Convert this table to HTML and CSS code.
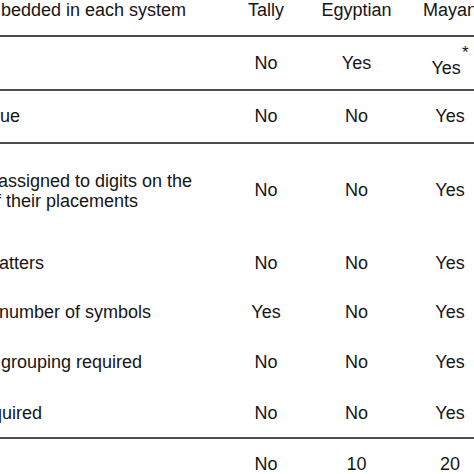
FILE: index.html
```html
<!DOCTYPE html>
<html>
<head>
<meta charset="utf-8">
<link rel="stylesheet" href="styles.css">
</head>
<body>
<div class="table">
  <div class="row head ruled">
    <div class="label"><span class="frag f1">bedded in each system</span></div>
    <div class="cell">Tally</div>
    <div class="cell">Egyptian</div>
    <div class="cell">Mayan</div>
  </div>
  <div class="row r1 ruled">
    <div class="label"></div>
    <div class="cell">No</div>
    <div class="cell">Yes</div>
    <div class="cell low">Yes<span class="star">*</span></div>
  </div>
  <div class="row r2 ruled">
    <div class="label"><span class="frag f0">ue</span></div>
    <div class="cell">No</div>
    <div class="cell">No</div>
    <div class="cell">Yes</div>
  </div>
  <div class="row r3">
    <div class="label two"><span class="frag fm2">assigned to digits on the</span><span class="frag fm4">f their placements</span></div>
    <div class="cell">No</div>
    <div class="cell">No</div>
    <div class="cell">Yes</div>
  </div>
  <div class="row r4">
    <div class="label"><span class="frag fm1">atters</span></div>
    <div class="cell">No</div>
    <div class="cell">No</div>
    <div class="cell">Yes</div>
  </div>
  <div class="row r5">
    <div class="label"><span class="frag fm1">number of symbols</span></div>
    <div class="cell">Yes</div>
    <div class="cell">No</div>
    <div class="cell">Yes</div>
  </div>
  <div class="row r6">
    <div class="label"><span class="frag f1">grouping required</span></div>
    <div class="cell">No</div>
    <div class="cell">No</div>
    <div class="cell">Yes</div>
  </div>
  <div class="row r7 ruled">
    <div class="label"><span class="frag fm8">quired</span></div>
    <div class="cell">No</div>
    <div class="cell">No</div>
    <div class="cell">Yes</div>
  </div>
  <div class="row r8">
    <div class="label"></div>
    <div class="cell">No</div>
    <div class="cell">10</div>
    <div class="cell">20</div>
  </div>
</div>
</body>
</html>
```
FILE: styles.css
```css
html, body {
  margin: 0;
  padding: 0;
  background: #ffffff;
  overflow: hidden;
}
body {
  width: 474px;
  height: 474px;
  font-family: "Liberation Sans", Arial, sans-serif;
  font-size: 18px;
  color: #151515;
}
.table {
  width: 498px;
}
.row {
  display: grid;
  grid-template-columns: 221px 90px 91px 96px;
  box-sizing: border-box;
  line-height: 21px;
}
.ruled {
  border-bottom: 2px solid #4d4d4d;
}
.label {
  overflow: hidden;
  display: flex;
  align-items: center;
  white-space: nowrap;
}
.label.two {
  flex-direction: column;
  align-items: flex-start;
  justify-content: center;
  line-height: 20px;
}
.cell {
  display: flex;
  align-items: center;
  justify-content: center;
  white-space: nowrap;
}
.frag { display: block; }
.f1 { margin-left: 1px; }
.f0 { margin-left: 0; }
.fm1 { margin-left: -1px; }
.fm2 { margin-left: -2px; }
.fm4 { margin-left: -4px; }
.fm8 { margin-left: -8px; }

.head { height: 37px; }
.head .label, .head .cell { align-items: flex-start; }
.r1 { height: 54px; }
.r2 { height: 53px; }
.r3 { height: 93px; }
.r4 { height: 52px; }
.r5 { height: 47px; }
.r6 { height: 53px; }
.r7 { height: 50px; }
.r8 { height: 50px; }

.low { padding-top: 10px; }
.star {
  position: relative;
  top: -16px;
  font-size: 17px;
  margin-left: 1px;
}
```
